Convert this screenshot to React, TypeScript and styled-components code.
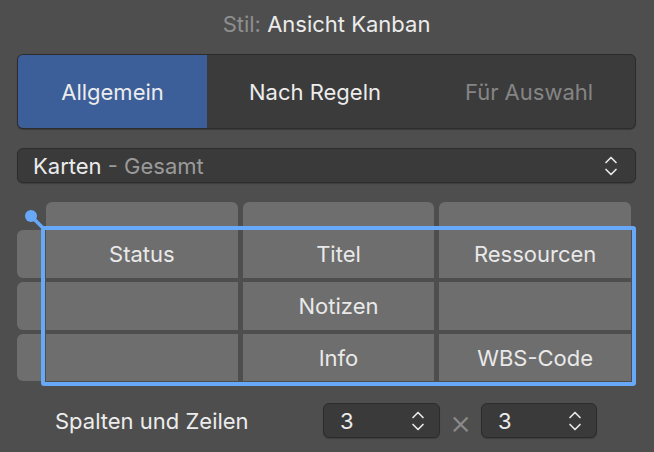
import React from "react";
import styled, { createGlobalStyle } from "styled-components";

const Global = createGlobalStyle`
  html, body { margin: 0; padding: 0; background: #4e4e4e; }
  body { font-family: Inter, "Noto Sans", "Liberation Sans", sans-serif; -webkit-font-smoothing: antialiased; }
  * { box-sizing: border-box; }
`;

const Panel = styled.div`
  width: 654px;
  height: 452px;
  background: #4e4e4e;
  padding: 0 18px 0 17px;
  display: flex;
  flex-direction: column;
  color: #ececec;
  font-size: 22px;
`;

const Title = styled.div`
  height: 54px;
  padding-top: 11px;
  line-height: 26px;
  text-align: center;
  color: #ececec;
`;

const Muted = styled.span<{ $tone?: string }>`
  color: ${(p) => p.$tone ?? "#8e8e8e"};
`;

const Segmented = styled.div`
  height: 75px;
  display: flex;
  background: #3b3b3b;
  border: 1px solid #2c2c2c;
  border-radius: 6px;
  overflow: hidden;
  box-shadow: 0 1px 1px rgba(0, 0, 0, 0.25);
`;

const Segment = styled.div<{ $w?: number; $active?: boolean; $disabled?: boolean }>`
  ${(p) => (p.$w ? `width: ${p.$w}px;` : "flex: 1;")}
  display: flex;
  align-items: center;
  justify-content: center;
  background: ${(p) => (p.$active ? "#3d5f99" : "transparent")};
  color: ${(p) => (p.$disabled ? "#858585" : "#ececec")};
`;

const Select = styled.div`
  margin-top: 19px;
  height: 35px;
  display: flex;
  align-items: center;
  justify-content: space-between;
  padding: 0 17px 0 15px;
  background: #3a3a3a;
  border: 1px solid #2c2c2c;
  border-radius: 6px;
  box-shadow: 0 1px 1px rgba(0, 0, 0, 0.2);
`;

const GridWrap = styled.div`
  position: relative;
  margin-top: 19px;
  width: 614px;
`;

const Grid = styled.div`
  display: grid;
  grid-template-columns: 24px repeat(3, 1fr);
  grid-template-rows: 24px 48px 48px 47px;
  column-gap: 5px;
  row-gap: 4px;
`;

const Corner = styled.div``;

const HeadCell = styled.div`
  background: #6e6e6e;
  border-radius: 6px 6px 0 0;
`;

const SideCell = styled.div`
  background: #6e6e6e;
  border-radius: 6px 0 0 6px;
`;

const Cell = styled.div`
  background: #6e6e6e;
  display: flex;
  align-items: center;
  justify-content: center;
  color: #e9e9e9;
`;

const Selection = styled.div`
  position: absolute;
  left: 24px;
  top: 24px;
  width: 595px;
  height: 160px;
  border: 4px solid #67a8f8;
  border-radius: 3px;
  pointer-events: none;
`;

const Handle = styled.svg`
  position: absolute;
  left: 6px;
  top: 6px;
`;

const Footer = styled.div`
  margin-top: 22px;
  height: 35px;
  display: flex;
  align-items: center;
  padding-left: 38px;
`;

const Label = styled.div`
  width: 268px;
  color: #ececec;
`;

const Stepper = styled.div<{ $w: number }>`
  width: ${(p) => p.$w}px;
  height: 35px;
  display: flex;
  align-items: center;
  justify-content: space-between;
  padding: 0 14px 0 16px;
  background: #3a3a3a;
  border: 1px solid #2c2c2c;
  border-radius: 6px;
  box-shadow: 0 1px 1px rgba(0, 0, 0, 0.2);
`;

const Times = styled.div`
  width: 41px;
  text-align: center;
  color: #8a8a8a;
  font-size: 34px;
  font-weight: 300;
  line-height: 30px;
  padding-top: 2px;
`;

const Chevrons = () => (
  <svg width="14" height="24" viewBox="0 0 14 24" fill="none">
    <path d="M2 8.5 L7 3.5 L12 8.5" stroke="#e6e6e6" strokeWidth="1.7" strokeLinecap="round" strokeLinejoin="round" />
    <path d="M2 15.5 L7 20.5 L12 15.5" stroke="#e6e6e6" strokeWidth="1.7" strokeLinecap="round" strokeLinejoin="round" />
  </svg>
);

export default function App() {
  const rows = [
    ["Status", "Titel", "Ressourcen"],
    ["", "Notizen", ""],
    ["", "Info", "WBS-Code"],
  ];
  return (
    <>
      <Global />
      <Panel>
        <Title>
          <Muted>Stil:</Muted> Ansicht Kanban
        </Title>
        <Segmented>
          <Segment $w={189} $active>
            Allgemein
          </Segment>
          <Segment $w={216}>Nach Regeln</Segment>
          <Segment $disabled>Für Auswahl</Segment>
        </Segmented>
        <Select>
          <span>
            Karten <Muted $tone="#9a9a9a">- Gesamt</Muted>
          </span>
          <Chevrons />
        </Select>
        <GridWrap>
          <Grid>
            <Corner />
            <HeadCell />
            <HeadCell />
            <HeadCell />
            {rows.map((r, i) => (
              <React.Fragment key={i}>
                <SideCell />
                {r.map((t, j) => (
                  <Cell key={j}>{t}</Cell>
                ))}
              </React.Fragment>
            ))}
          </Grid>
          <Selection />
          <Handle width="22" height="24" viewBox="0 0 22 24">
            <line x1="8" y1="8" x2="20" y2="20" stroke="#67a8f8" strokeWidth="3.5" />
            <circle cx="8" cy="8" r="6" fill="#67a8f8" />
          </Handle>
        </GridWrap>
        <Footer>
          <Label>Spalten und Zeilen</Label>
          <Stepper $w={117}>
            <span>3</span>
            <Chevrons />
          </Stepper>
          <Times>×</Times>
          <Stepper $w={116}>
            <span>3</span>
            <Chevrons />
          </Stepper>
        </Footer>
      </Panel>
    </>
  );
}
